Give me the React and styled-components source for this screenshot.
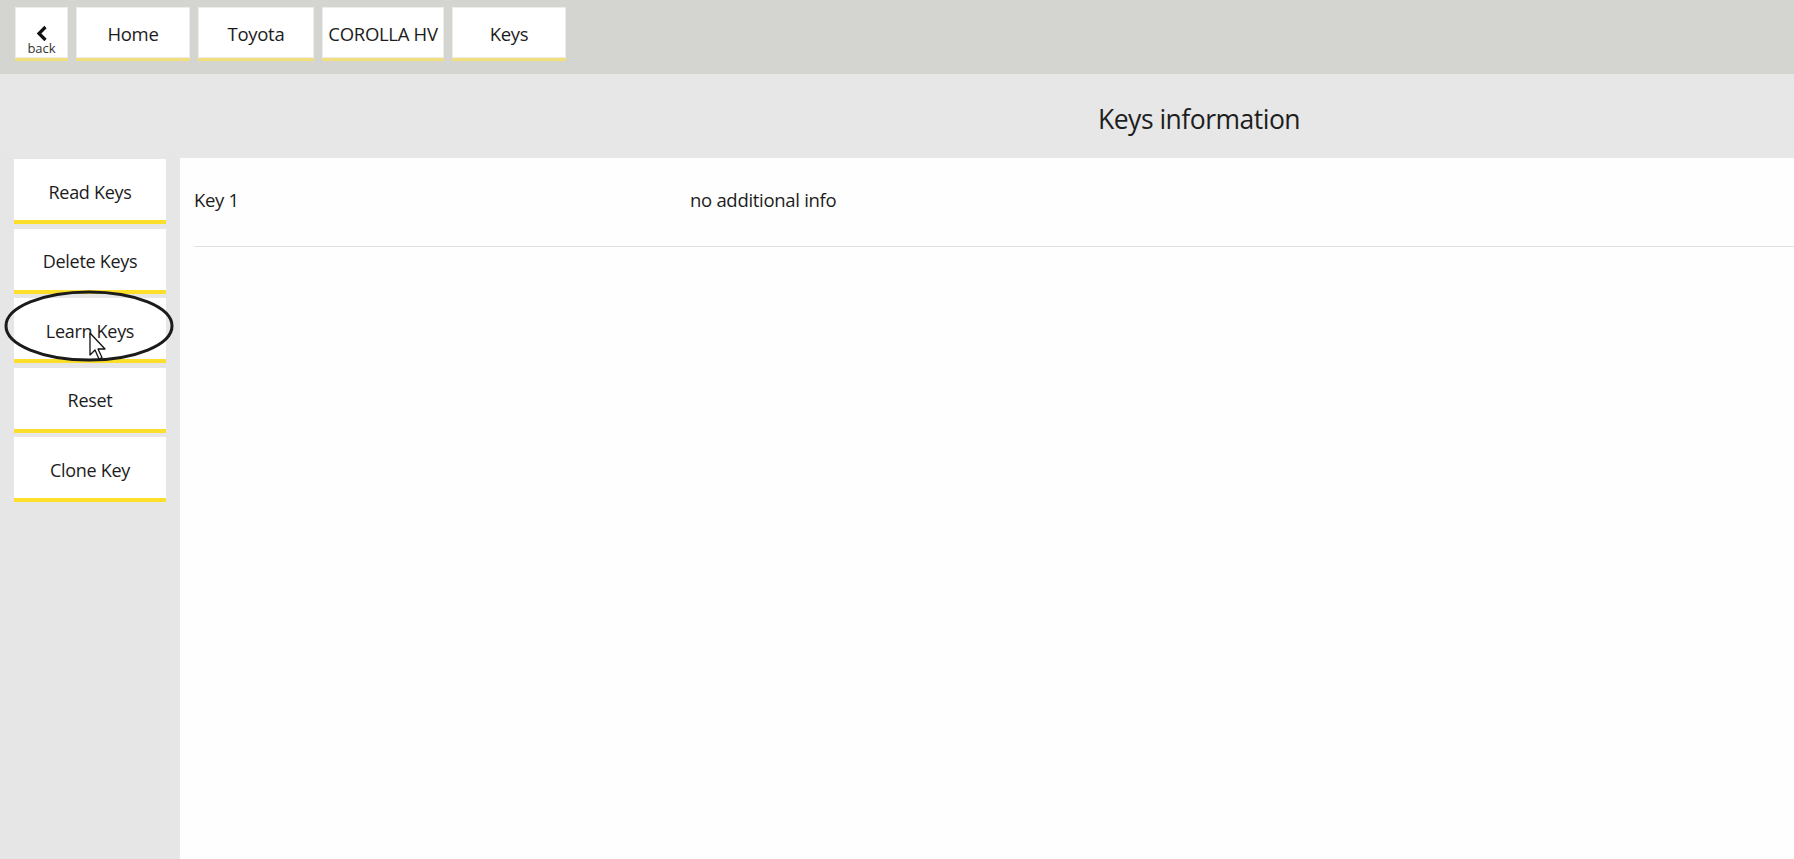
import React from "react";
import styled, { createGlobalStyle } from "styled-components";

const Global = createGlobalStyle`
  html, body { margin: 0; padding: 0; }
  body {
    font-family: "Open Sans", "Noto Sans", sans-serif;
    color: #1c1c1c;
    background: #e7e7e7;
    overflow: hidden;
  }
  #root { height: 859px; }
`;

const Page = styled.div`
  display: flex;
  flex-direction: column;
  height: 859px;
  width: 1794px;
`;

const TopBar = styled.div`
  height: 74px;
  background: #d4d4d0;
  display: flex;
  align-items: flex-start;
  gap: 8px;
  padding: 7px 0 0 15px;
  box-sizing: border-box;
`;

const Crumb = styled.button`
  width: ${(p) => p.$w}px;
  height: 54px;
  background: #ffffff;
  border: none;
  border-bottom: 3px solid #f1df7c;
  box-shadow: inset 0 0 0 1px #ececec;
  font-family: inherit;
  font-size: 18.5px;
  color: #1c1c1c;
  padding: ${(p) => (p.$back ? "14px 0 0" : "1px 0 0")};
  display: flex;
  flex-direction: column;
  align-items: center;
  justify-content: center;
  letter-spacing: -0.3px;
  cursor: pointer;
`;

const BackLabel = styled.span`
  font-size: 13px;
  line-height: 12px;
  color: #333;
  letter-spacing: 0;
`;

const HeaderBand = styled.div`
  height: 84px;
  display: flex;
  align-items: center;
  padding-left: 1098px;
  box-sizing: border-box;
  background: #e7e7e7;
`;

const Title = styled.h1`
  margin: 0 0 -6px;
  font-size: 26.5px;
  font-weight: 400;
  color: #1e1e1e;
  letter-spacing: -0.5px;
`;

const Body = styled.div`
  flex: 1;
  display: flex;
  min-height: 0;
`;

const Sidebar = styled.div`
  width: 180px;
  flex-shrink: 0;
  position: relative;
  background: #e6e6e6;
  display: flex;
  flex-direction: column;
  gap: 4.5px;
  padding: 1px 14px 0;
  box-sizing: border-box;
`;

const SideButton = styled.button`
  height: 65px;
  width: 152px;
  background: #ffffff;
  border: none;
  border-bottom: 4px solid #fbdf2a;
  font-family: inherit;
  font-size: 18px;
  color: #1c1c1c;
  letter-spacing: -0.3px;
  padding: 4px 0 0;
  cursor: pointer;
`;

const Annotation = styled.svg`
  position: absolute;
  left: 4px;
  top: 131px;
  pointer-events: none;
  overflow: visible;
`;

const Content = styled.div`
  flex: 1;
  background: #fefefe;
  padding-left: 14px;
`;

const Row = styled.div`
  display: grid;
  grid-template-columns: 496px 1fr;
  align-items: center;
  height: 89px;
  border-bottom: 1px solid #e2e2e2;
  font-size: 18.5px;
  letter-spacing: -0.3px;
  padding-bottom: 6px;
  box-sizing: border-box;
`;

const Cell = styled.span``;

export default function App() {
  const crumbs = [
    { label: "Home", w: 114 },
    { label: "Toyota", w: 116 },
    { label: "COROLLA HV", w: 122 },
    { label: "Keys", w: 114 },
  ];
  const actions = ["Read Keys", "Delete Keys", "Learn Keys", "Reset", "Clone Key"];
  return (
    <Page>
      <Global />
      <TopBar>
        <Crumb $w={53} $back>
          <svg width="14" height="17" viewBox="0 0 14 17">
            <path d="M10.5 2 L4 8.5 L10.5 15" fill="none" stroke="#111" strokeWidth="3.2" />
          </svg>
          <BackLabel>back</BackLabel>
        </Crumb>
        {crumbs.map((c) => (
          <Crumb key={c.label} $w={c.w}>{c.label}</Crumb>
        ))}
      </TopBar>
      <HeaderBand>
        <Title>Keys information</Title>
      </HeaderBand>
      <Body>
        <Sidebar>
          {actions.map((a) => (
            <SideButton key={a}>{a}</SideButton>
          ))}
          <Annotation width="172" height="80">
            <ellipse cx="85" cy="37" rx="83" ry="34" fill="none" stroke="#1b1b1b" strokeWidth="3" />
            <path
              d="M86 44 L86 66 L91 61 L95 70 L98 68.5 L94 60 L101 60 Z"
              fill="#ffffff"
              stroke="#111"
              strokeWidth="1.3"
              strokeLinejoin="round"
            />
          </Annotation>
        </Sidebar>
        <Content>
          <Row>
            <Cell>Key 1</Cell>
            <Cell>no additional info</Cell>
          </Row>
        </Content>
      </Body>
    </Page>
  );
}
